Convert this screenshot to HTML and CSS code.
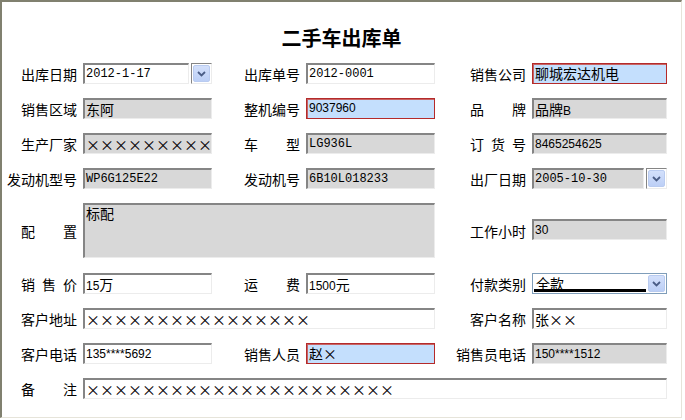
FILE: index.html
```html
<!DOCTYPE html>
<html lang="zh-CN">
<head>
    <meta charset="UTF-8">
    <title>二手车出库单</title>
    <link rel="stylesheet" href="styles.css">
</head>
<body>
    <div class="sheet">
        <h1 class="title">二手车出库单</h1>

        <div class="form">
            <!-- 第1行 -->
            <div class="label">出库日期</div>
            <div class="combo">
                <div class="field mono">2012-1-17</div>
                <div class="drop"><div class="btn"><svg width="9" height="6" viewBox="0 0 9 6"><path d="M1 1 L4.5 4.5 L8 1" fill="none" stroke="#4a5d86" stroke-width="1.8"/></svg></div></div>
            </div>
            <div class="label">出库单号</div>
            <div class="field mono">2012-0001</div>
            <div class="label">销售公司</div>
            <div class="field hl"><span class="zh">聊城宏达机电</span></div>

            <!-- 第2行 -->
            <div class="label">销售区域</div>
            <div class="field ro"><span class="zh">东阿</span></div>
            <div class="label">整机编号</div>
            <div class="field hl">9037960</div>
            <div class="label"><span class="sp"><i>品</i><i>牌</i></span></div>
            <div class="field ro"><span class="zh">品牌</span>B</div>

            <!-- 第3行 -->
            <div class="label">生产厂家</div>
            <div class="field ro"><span class="zh">××××××××××</span></div>
            <div class="label"><span class="sp"><i>车</i><i>型</i></span></div>
            <div class="field ro mono">LG936L</div>
            <div class="label"><span class="sp"><i>订</i><i>货</i><i>号</i></span></div>
            <div class="field ro">8465254625</div>

            <!-- 第4行 -->
            <div class="label">发动机型号</div>
            <div class="field ro mono">WP6G125E22</div>
            <div class="label">发动机号</div>
            <div class="field ro mono">6B10L018233</div>
            <div class="label">出厂日期</div>
            <div class="combo">
                <div class="field ro mono">2005-10-30</div>
                <div class="drop"><div class="btn"><svg width="9" height="6" viewBox="0 0 9 6"><path d="M1 1 L4.5 4.5 L8 1" fill="none" stroke="#4a5d86" stroke-width="1.8"/></svg></div></div>
            </div>

            <!-- 配置 -->
            <div class="label"><span class="sp"><i>配</i><i>置</i></span></div>
            <div class="field ro area wide2"><span class="zh">标配</span></div>
            <div class="label">工作小时</div>
            <div class="field ro mid">30</div>

            <!-- 第6行 -->
            <div class="label"><span class="sp"><i>销</i><i>售</i><i>价</i></span></div>
            <div class="field">15<span class="zh">万</span></div>
            <div class="label"><span class="sp"><i>运</i><i>费</i></span></div>
            <div class="field">1500<span class="zh">元</span></div>
            <div class="label">付款类别</div>
            <div class="select">
                <div class="value"><span class="zh">全款</span></div>
                <div class="btn"><svg width="9" height="6" viewBox="0 0 9 6"><path d="M1 1 L4.5 4.5 L8 1" fill="none" stroke="#4a5d86" stroke-width="1.8"/></svg></div>
            </div>

            <!-- 第7行 -->
            <div class="label">客户地址</div>
            <div class="field wide2"><span class="zh">××××××××××××××××</span></div>
            <div class="label">客户名称</div>
            <div class="field"><span class="zh">张××</span></div>

            <!-- 第8行 -->
            <div class="label">客户电话</div>
            <div class="field">135****5692</div>
            <div class="label">销售人员</div>
            <div class="field hl"><span class="zh">赵×</span></div>
            <div class="label">销售员电话</div>
            <div class="field ro">150****1512</div>

            <!-- 备注 -->
            <div class="label"><span class="sp"><i>备</i><i>注</i></span></div>
            <div class="field wide4"><span class="zh">××××××××××××××××××××××</span></div>
        </div>
    </div>
</body>
</html>
```

FILE: styles.css
```css
body {
    margin: 0;
    background-color: #fff;
    font-family: "Noto Sans CJK SC", sans-serif;
    color: #000;
}

.sheet {
    width: 679px;
    height: 415px;
    border-top: 2px solid #80806f;
    border-left: 2px solid #80806f;
    border-right: 1px solid #e6e4da;
    border-bottom: 1px solid #e6e4da;
    background-color: #fff;
}

.title {
    margin: 24px 0 13px;
    font-size: 20px;
    line-height: 24px;
    font-weight: bold;
    text-align: center;
}

.form {
    display: grid;
    grid-template-columns: 78px 129px 94px 129px 97px 135px;
    grid-template-rows: 21px 21px 21px 21px 56px 21px 21px 21px 21px;
    row-gap: 14px;
    padding-left: 3px;
}

.label {
    display: flex;
    align-items: center;
    justify-content: flex-end;
    padding-right: 6px;
    font-size: 14px;
    white-space: nowrap;
}

/* 两三个字的标签两端对齐 */
.sp {
    display: flex;
    justify-content: space-between;
    width: 56px;
}

.sp i {
    font-style: normal;
}

.field {
    box-sizing: border-box;
    height: 21px;
    padding: 0 2px 0 1px;
    border-top: 2px solid #858585;
    border-left: 2px solid #858585;
    border-right: 1px solid #ececec;
    border-bottom: 1px solid #ececec;
    background-color: #fff;
    font-family: "Liberation Sans", "Noto Sans CJK SC", sans-serif;
    font-size: 12px;
    line-height: 18px;
    white-space: nowrap;
    overflow: hidden;
}

.field.ro {
    background-color: #d8d8d8;
}

.field.hl {
    border: 1px solid #b42a2a;
    box-shadow: inset 1px 1px 0 #c86464;
    padding-left: 2px;
    background-color: #c4dffd;
}

.mono {
    font-family: "Liberation Mono", monospace;
    font-size: 12px;
}

.zh {
    font-family: "Noto Sans CJK SC", sans-serif;
    font-size: 14px;
}

.field.area {
    height: 55px;
    line-height: 17px;
}

.field.mid {
    align-self: center;
    margin-bottom: 4px;
}

.wide2 {
    grid-column: 2 / 5;
}

.wide4 {
    grid-column: 2 / 7;
}

.combo {
    display: flex;
    gap: 2px;
}

.combo .field {
    flex: 1;
}

.drop {
    box-sizing: border-box;
    width: 21px;
    height: 21px;
    border-top: 1px solid #858585;
    border-left: 1px solid #858585;
    border-right: 1px solid #ececec;
    border-bottom: 1px solid #ececec;
    padding: 1px;
}

.btn {
    display: flex;
    align-items: center;
    justify-content: center;
    box-sizing: border-box;
    height: 100%;
    border: 1px solid #b9cbf0;
    border-radius: 2px;
    background: linear-gradient(#d3e0fb, #bccff6);
}

.select {
    display: flex;
    box-sizing: border-box;
    height: 21px;
    padding: 1px;
    border: 1px solid #7f9db9;
    background-color: #fff;
}

.select .value {
    flex: 1;
    margin-right: 2px;
    padding-left: 2px;
    border-bottom: 3px solid #000;
    line-height: 14px;
}

.select .value .zh {
    line-height: 14px;
}

.select .btn {
    width: 17px;
}
```
